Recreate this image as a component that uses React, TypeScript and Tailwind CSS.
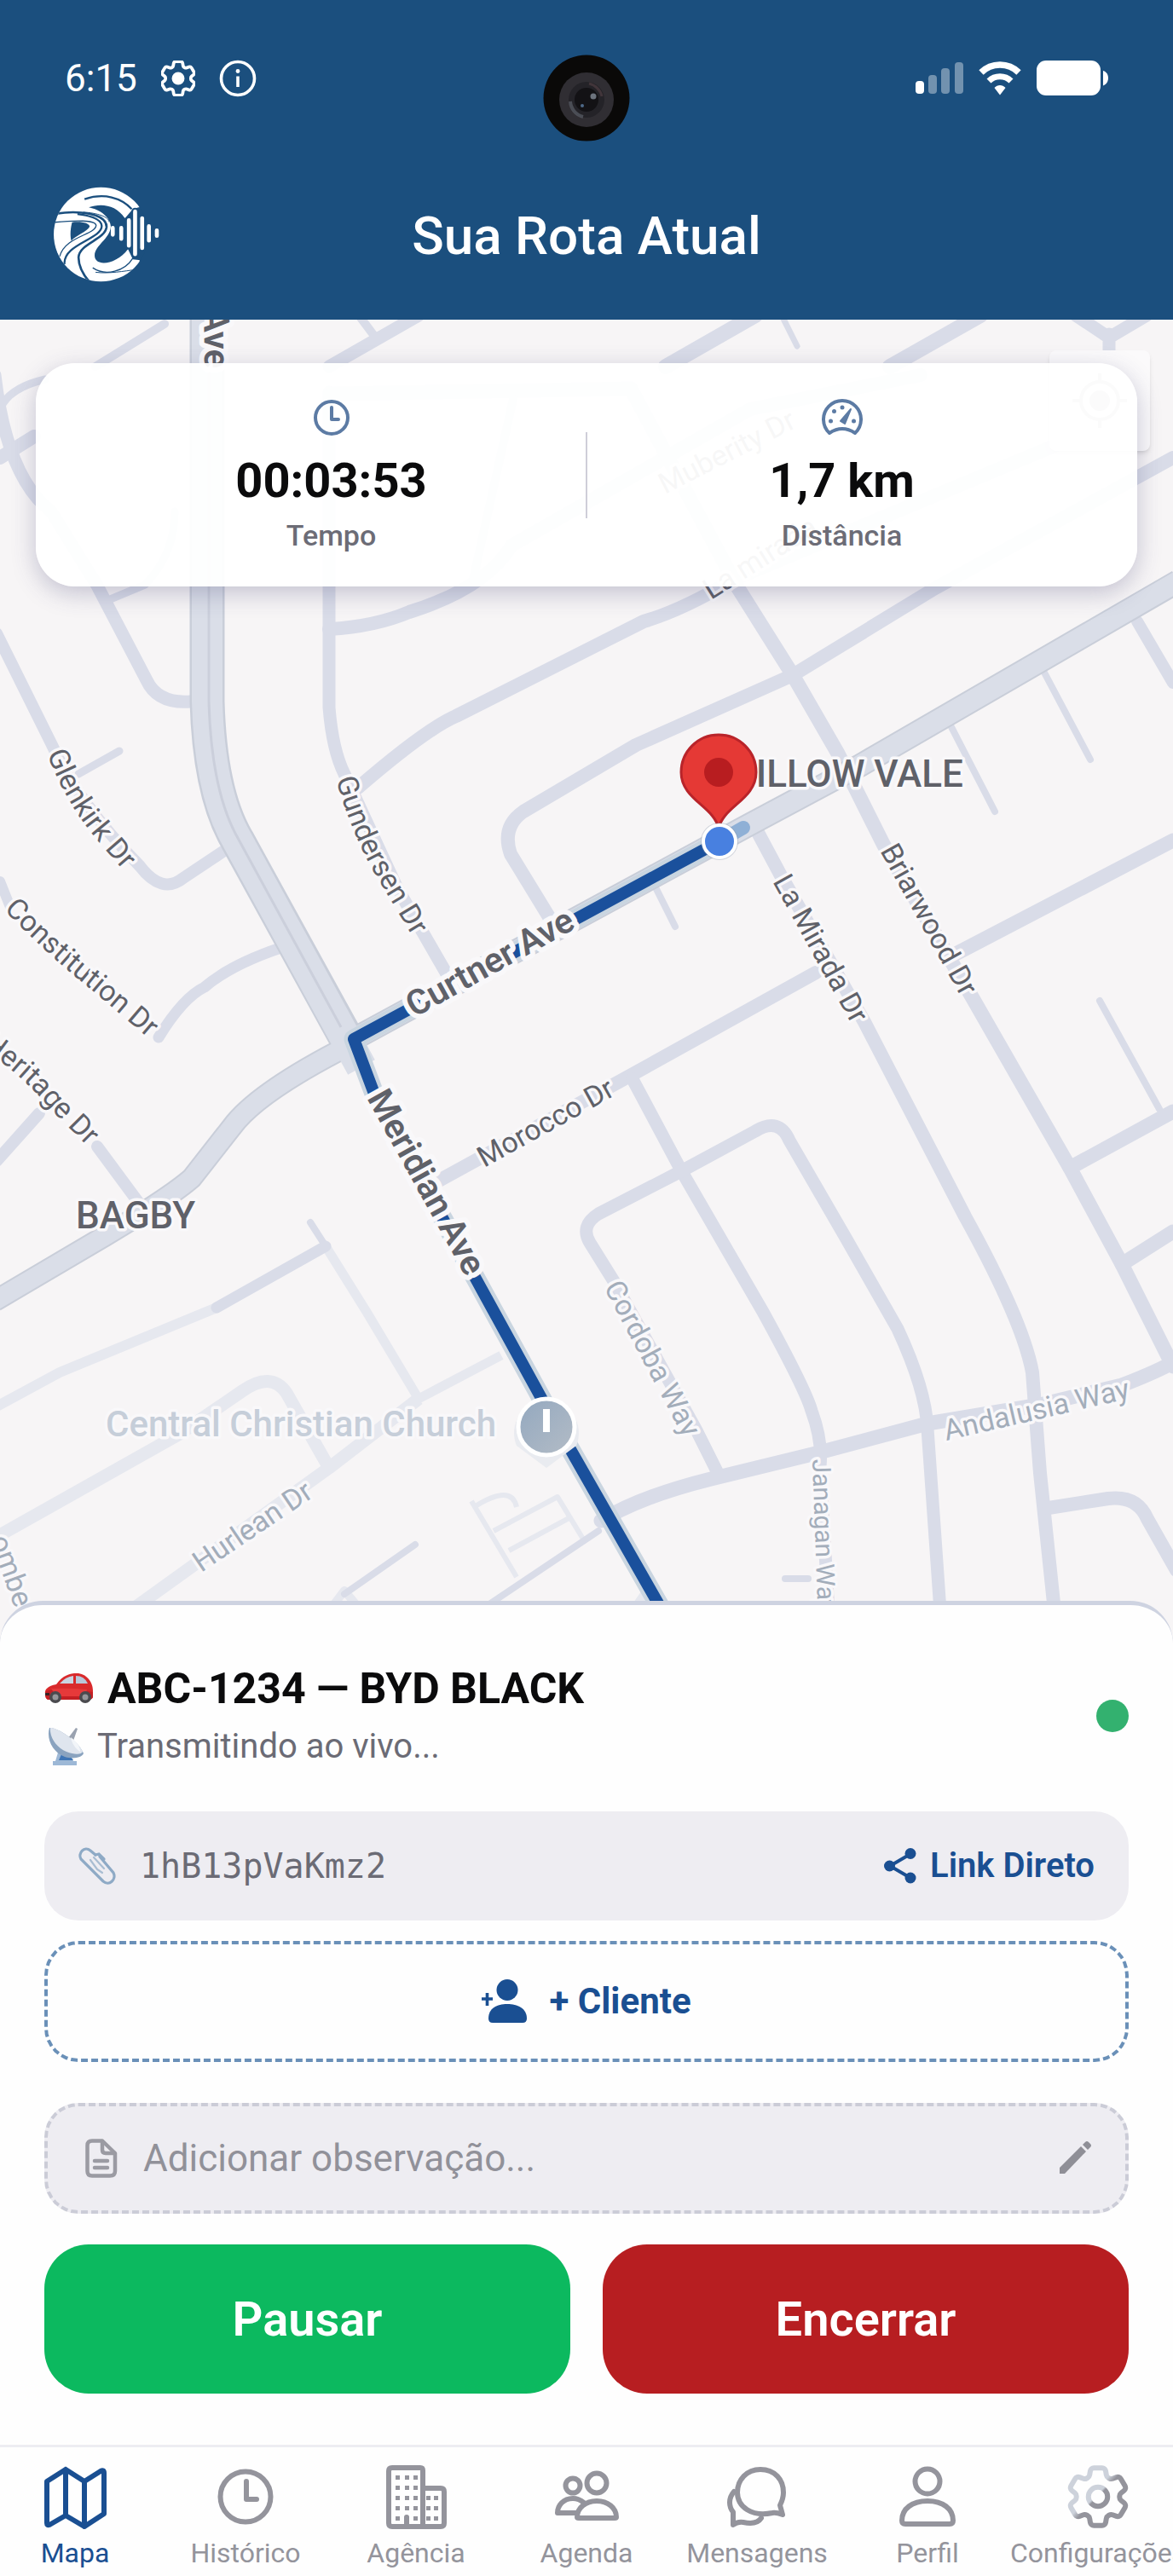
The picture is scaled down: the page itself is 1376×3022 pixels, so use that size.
import type { ReactNode } from "react"

const COG_PATH =
  "M9.594 3.94c.09-.542.56-.94 1.11-.94h2.593c.55 0 1.02.398 1.11.94l.213 1.281c.063.374.313.686.645.87.074.04.147.083.22.127.325.196.72.257 1.075.124l1.217-.456a1.125 1.125 0 0 1 1.37.49l1.296 2.247a1.125 1.125 0 0 1-.26 1.431l-1.003.827c-.293.241-.438.613-.43.992a7.723 7.723 0 0 1 0 .255c-.008.378.137.75.43.991l1.004.827c.424.35.534.955.26 1.43l-1.298 2.247a1.125 1.125 0 0 1-1.369.491l-1.217-.456c-.355-.133-.75-.072-1.076.124a6.47 6.47 0 0 1-.22.128c-.331.183-.581.495-.644.869l-.213 1.281c-.09.543-.56.94-1.11.94h-2.594c-.55 0-1.019-.398-1.11-.94l-.213-1.281c-.062-.374-.312-.686-.644-.87a6.52 6.52 0 0 1-.22-.127c-.325-.196-.72-.257-1.076-.124l-1.217.456a1.125 1.125 0 0 1-1.369-.49l-1.297-2.247a1.125 1.125 0 0 1 .26-1.431l1.004-.827c.292-.24.437-.613.43-.991a6.932 6.932 0 0 1 0-.255c.007-.38-.138-.751-.43-.992l-1.004-.827a1.125 1.125 0 0 1-.26-1.43l1.297-2.247a1.125 1.125 0 0 1 1.37-.491l1.216.456c.356.133.751.072 1.076-.124.072-.044.146-.086.22-.128.332-.183.582-.495.644-.869l.214-1.28Z"

/* ---------- header ---------- */

function StatusBar() {
  return (
    <div className="flex h-11 items-center justify-between px-[76px] text-white">
      <div className="flex items-center gap-7">
        <span className="text-[44px] leading-[44px]">6:15</span>
        <svg className="h-[42px] w-10" viewBox="2.9 2.6 18.2 18.8" fill="none">
          <path d={COG_PATH} stroke="currentColor" strokeWidth="1.7" />
          <circle cx="12" cy="12" r="3.4" fill="currentColor" />
        </svg>
        <svg className="size-11" viewBox="0 0 44 44" fill="none">
          <circle cx="22" cy="22" r="19.5" stroke="currentColor" strokeWidth="3.6" />
          <circle cx="22" cy="13.5" r="2.4" fill="currentColor" />
          <path d="M22 19.5V32" stroke="currentColor" strokeWidth="3.6" />
        </svg>
      </div>

      <div className="flex items-center gap-[18px]">
        <svg className="h-10 w-14" viewBox="0 0 56 40" fill="currentColor">
          <rect x="0" y="23" width="10" height="15" rx="4" />
          <g opacity=".38">
            <rect x="15" y="16" width="10" height="22" rx="4" />
            <rect x="30" y="8" width="10" height="30" rx="4" />
            <rect x="46" y="1" width="10" height="37" rx="4" />
          </g>
        </svg>
        <svg className="h-10 w-[50px]" viewBox="0 0 50 40" fill="none">
          <path d="M3 13C15 1 35 1 47 13" stroke="currentColor" strokeWidth="7.5" />
          <path d="M12 23C19 16 31 16 38 23" stroke="currentColor" strokeWidth="7" />
          <path d="M25 39.5 18.5 31C22 27 28 27 31.5 31Z" fill="currentColor" />
        </svg>
        <svg className="h-[42px] w-[84px]" viewBox="0 0 84 42" fill="currentColor">
          <rect width="75" height="41" rx="11" />
          <path d="M78 12C86 14 86 27 78 29.5Z" />
        </svg>
      </div>
    </div>
  )
}

function CameraHole() {
  return (
    <svg
      className="absolute top-16 left-1/2 size-[102px] -translate-x-1/2"
      viewBox="0 0 102 102"
      aria-hidden="true"
    >
      <circle cx="51" cy="51" r="50.5" fill="#0a0908" />
      <circle cx="51" cy="53" r="32" fill="#302e33" />
      <circle cx="51" cy="53" r="21" fill="#242328" />
      <circle cx="51" cy="53" r="14" fill="#131215" />
      <path d="M32 55a20 20 0 0 0 15 18" fill="none" stroke="#5b5f68" strokeWidth="4" opacity=".7" />
      <path d="M54 34a20 20 0 0 1 15 15" fill="none" stroke="#4e3d42" strokeWidth="3" opacity=".7" />
      <circle cx="59" cy="49" r="3.5" fill="#6c737d" />
      <circle cx="46" cy="60" r="2" fill="#4e6a88" />
    </svg>
  )
}

function Logo() {
  return (
    <svg className="h-28 w-[125px]" viewBox="64 53 375 338" role="img" aria-label="Logo">
      <defs>
        <clipPath id="logo-disc">
          <circle cx="233" cy="222" r="167" />
        </clipPath>
      </defs>
      <g clipPath="url(#logo-disc)">
        <rect x="60" y="50" width="310" height="345" fill="#fff" />
        <g fill="#1b4f7e">
          <path d="M131 179C160 174 195 182 193 195C182 214 146 224 128 245C123 222 126 198 131 179Z" />
          <path d="M190 126C235 110 288 118 318 165L346 132L420 110V318L346 310L329 274C290 328 214 338 211 300C208 262 264 240 268 195C266 164 238 136 190 126Z" />
        </g>
        <g fill="none" stroke="#1b4f7e">
          <path d="M175 97C245 74 305 92 342 132" strokeWidth="7" />
          <path d="M70 149C150 136 254 146 253 196C248 240 158 254 154 302C153 334 168 362 194 392" strokeWidth="8" />
          <path d="M70 179C140 172 214 170 216 190C214 224 106 228 87 300" strokeWidth="4" />
          <path d="M104 328C98 256 236 240 236 192C234 168 200 156 150 150" strokeWidth="7" />
          <path d="M170 143C220 146 262 160 262 178" strokeWidth="3" />
          <path d="M204 340C250 372 318 352 346 306" strokeWidth="4" />
          <path d="M214 356C262 362 312 352 362 346" strokeWidth="3" />
        </g>
      </g>
      <g stroke="#1b4f7e" strokeWidth="26" strokeLinecap="round">
        <path d="M332 172V262M354 141V292" />
      </g>
      <g stroke="#fff" strokeWidth="14" strokeLinecap="round">
        <path d="M275 199V223M305 199V238M332 172V262M354 141V292M379 165V270M403 193V244M431 208V227" />
      </g>
    </svg>
  )
}

function Header() {
  return (
    <header className="relative bg-[#1b4f7e] pt-[70px] pb-11">
      <StatusBar />
      <CameraHole />
      <div className="mt-[105px] grid grid-cols-[1fr_auto_1fr] items-center px-[62px]">
        <Logo />
        <h1 className="pt-1 text-[62px] leading-[72px] font-medium text-white">Sua Rota Atual</h1>
      </div>
    </header>
  )
}

/* ---------- map ---------- */

interface Road {
  d: string
  w: number
}

const ROADS: Road[] = [
  { d: "M-4 743L61 874Q90 940 164 1016Q190 1050 215 1030L263 998", w: 14 },
  { d: "M92 908L140 881", w: 9 },
  { d: "M-6 440Q8 560 60 600L114 687L172 798Q185 826 224 823", w: 15 },
  { d: "M0 480Q10 455 53 445", w: 9 },
  { d: "M0 537L40 512", w: 16 },
  { d: "M127 704L170 686Q205 650 205 600", w: 9 },
  { d: "M112 430L193 380", w: 10 },
  { d: "M386 430L491 370", w: 15 },
  { d: "M421 370L439 394", w: 10 },
  { d: "M781 430L886 370", w: 18 },
  { d: "M917 370L935 406", w: 7 },
  { d: "M1044 430L1150 370", w: 18 },
  { d: "M1262 370L1301 396L1345 370M1301 392V430", w: 15 },
  { d: "M386 460V830Q390 880 404 908L465 1040L526 1146", w: 15 },
  { d: "M386 738Q440 735 480 718Q570 690 600 640L880 480L1080 440", w: 16 },
  { d: "M420 924Q500 855 535 840L755 729Q800 716 860 680L1340 480", w: 16 },
  { d: "M654 1092L599 1002Q588 970 614 952L746 874L930 792L1097 690L1376 537", w: 16 },
  { d: "M390 462L740 456L864 687L930 792L983 884L1036 990L1141 1171L1255 1370L1316 1483L1376 1603", w: 17 },
  { d: "M602 468L555 680", w: 10 },
  { d: "M886 971L917 1029L1014 1199L1132 1427Q1200 1550 1211 1610L1220 1728L1237 1890", w: 16 },
  { d: "M1123 1118L1376 986", w: 17 },
  { d: "M1224 787L1279 891M1113 847L1167 952M768 1039L792 1087", w: 8 },
  { d: "M1334 729L1376 801", w: 14 },
  { d: "M513 1386L728 1268L957 1141", w: 16 },
  { d: "M742 1266L799 1373L895 1539Q945 1630 952 1655Q965 1690 962 1720L972 1890", w: 15 },
  { d: "M842 1728L818 1680L720 1503L692 1458Q680 1438 702 1424L799 1374L886 1327Q914 1310 926 1338L992 1452L1053 1559Q1086 1630 1088 1676L1103 1890", w: 15 },
  { d: "M705 1784Q750 1756 834 1735L957 1705L1088 1670L1220 1648L1316 1625Q1360 1608 1380 1596", w: 17 },
  { d: "M1230 1769L1300 1758Q1334 1754 1346 1782L1380 1842", w: 16 },
  { d: "M1290 1174L1360 1301", w: 8 },
  { d: "M1255 1370L1376 1304M1316 1483L1376 1445", w: 17 },
  { d: "M0 1034L12 1064", w: 12 },
  { d: "M186 1217Q215 1170 240 1158Q270 1132 329 1112", w: 13 },
  { d: "M114 1345L162 1410M46 1306L-4 1362", w: 14 },
  { d: "M364 1434L382 1462", w: 8 },
  { d: "M702 1796L562 1890M487 1812L404 1870M921 1852H948", w: 8 },
  { d: "M382 1462L254 1534", w: 13 },
]

const FADED_ROADS: Road[] = [
  { d: "M382 1462L430 1539L491 1641L588 1590", w: 11 },
  { d: "M254 1534L70 1610L-4 1650", w: 12 },
  { d: "M-4 1803L211 1682L284 1632Q318 1608 336 1634L386 1722", w: 15 },
  { d: "M158 1886L386 1722L491 1641", w: 15 },
  { d: "M386 1890L404 1866L424 1890M742 1890L756 1870", w: 10 },
  { d: "M553 1761L606 1850M556 1768Q600 1740 606 1768M579 1796L654 1756L685 1807M597 1819L671 1779", w: 6 },
]

interface CurvedLabel {
  id: string
  d: string
  text: string
}

interface StraightLabel {
  x: number
  y: number
  angle: number
  text: string
  size?: number
  strong?: boolean
  faint?: boolean
}

const CURVED_LABELS: CurvedLabel[] = [
  { id: "gundersen", d: "M394 914Q412 976 438 1022L492 1112", text: "Gundersen Dr" },
  { id: "glenkirk", d: "M55 884Q78 944 116 988L168 1048", text: "Glenkirk Dr" },
  { id: "constitution", d: "M4 1067Q60 1124 106 1160L200 1240", text: "Constitution Dr" },
  { id: "heritage", d: "M-22 1228Q30 1265 60 1302L130 1372", text: "Heritage Dr" },
]

const STRAIGHT_LABELS: StraightLabel[] = [
  { x: 239, y: 362, angle: 89, text: "Ave", size: 42, strong: true },
  { x: 486, y: 1194, angle: -29, text: "Curtner Ave", size: 41, strong: true },
  { x: 430, y: 1288, angle: 61, text: "Meridian Ave", size: 41, strong: true },
  { x: 568, y: 1370, angle: -29, text: "Morocco Dr" },
  { x: 906, y: 1034, angle: 61, text: "La Mirada Dr" },
  { x: 1032, y: 998, angle: 61, text: "Briarwood Dr" },
  { x: 708, y: 1510, angle: 62, text: "Cordoba Way", faint: true },
  { x: 1110, y: 1690, angle: -13, text: "Andalusia Way", faint: true },
  { x: 236, y: 1845, angle: -34, text: "Hurlean Dr", faint: true },
  { x: 953, y: 1712, angle: 88, text: "Janagan Way", size: 30, faint: true },
  { x: -12, y: 1806, angle: 70, text: "ombe", faint: true },
  { x: 834, y: 704, angle: -32, text: "La mirada" },
  { x: 780, y: 580, angle: -27, text: "Muberity Dr" },
]

function RouteMap() {
  return (
    <svg
      className="absolute inset-0 size-full"
      viewBox="0 375 1376 1600"
      preserveAspectRatio="xMidYMin slice"
      role="img"
      aria-label="Mapa da rota"
    >
      <defs>
        {CURVED_LABELS.map((label) => (
          <path key={label.id} id={`street-${label.id}`} d={label.d} />
        ))}
        <linearGradient id="poi-fill" x1="0" y1="0" x2="1" y2="1">
          <stop offset="0" stopColor="#93a8bf" />
          <stop offset="1" stopColor="#b3bcc6" />
        </linearGradient>
      </defs>
      <rect y="375" width="1376" height="1600" fill="#f7f5f6" />

      <g fill="none" stroke="#e6e8ef" strokeLinejoin="round">
        {FADED_ROADS.map((road) => (
          <path key={road.d} d={road.d} strokeWidth={road.w} />
        ))}
      </g>
      <g fill="none" stroke="#d9dce8" strokeLinejoin="round" strokeLinecap="round">
        {ROADS.map((road) => (
          <path key={road.d} d={road.d} strokeWidth={road.w} />
        ))}
      </g>

      {/* avenues with an outline */}
      <g fill="none" strokeLinejoin="round">
        <g stroke="#c9ced9">
          <path d="M-6 1526L123 1450Q200 1404 225 1382L272 1322Q300 1284 395 1234" strokeWidth="26" />
          <path d="M413 1220L878 968L1009 898L1382 682" strokeWidth="28" />
          <path d="M243 370V823Q246 930 278 985L410 1225" strokeWidth="41" />
        </g>
        <g stroke="#dadee8">
          <path d="M-6 1526L123 1450Q200 1404 225 1382L272 1322Q300 1284 395 1234" strokeWidth="22" />
          <path d="M413 1220L878 968L1009 898L1382 682" strokeWidth="24" />
          <path d="M243 370V823Q246 930 278 985L424 1252" strokeWidth="36" />
        </g>
        <path d="M245 370V823Q248 930 280 985L400 1205" stroke="#cbcfdb" strokeWidth="3" />
      </g>

      {/* travelled route */}
      <g fill="none" strokeLinejoin="round">
        <path d="M844 987L415 1219L439 1283L557 1498L641 1651L780 1895" stroke="#c9d5e0" strokeWidth="23" />
        <path d="M844 987L872 971" stroke="#8fb0d6" strokeWidth="16" strokeLinecap="round" />
        <path d="M844 987L415 1219L439 1283L557 1498L641 1651L780 1895" stroke="#1a509c" strokeWidth="14" />
      </g>

      <g
        fontFamily="Roboto, sans-serif"
        fill="#5f6169"
        stroke="#f9f8fa"
        strokeWidth="7"
        strokeLinejoin="round"
        paintOrder="stroke"
      >
        {CURVED_LABELS.map((label) => (
          <text key={label.id} fontSize="34">
            <textPath href={`#street-${label.id}`}>{label.text}</textPath>
          </text>
        ))}
        {STRAIGHT_LABELS.map((label) => (
          <text
            key={label.text}
            transform={`translate(${label.x} ${label.y}) rotate(${label.angle})`}
            fontSize={label.size ?? 34}
            fontWeight={label.strong ? 600 : 400}
            strokeWidth={label.strong ? 12 : undefined}
            fill={label.faint ? "#a3adba" : undefined}
          >
            {label.text}
          </text>
        ))}
        <text x="89" y="1441" fontSize="44" fontWeight="500">
          BAGBY
        </text>
        <text x="848" y="923" fontSize="44" fontWeight="500">
          WILLOW VALE
        </text>
        <text x="124" y="1685" fontSize="42" fontWeight="500" fill="#c6ced9">
          Central Christian Church
        </text>
      </g>

      {/* church */}
      <path d="M641 1722L606 1696A38 38 0 1 1 676 1696Z" fill="#e9ebf0" />
      <circle cx="641" cy="1674" r="33" fill="url(#poi-fill)" stroke="#fff" strokeWidth="5" />
      <path d="M641 1653V1680" stroke="#fff" strokeWidth="8" />

      {/* destination */}
      <path
        d="M843 972C838 946 799 938 799 906A44 44 0 0 1 887 906C887 938 848 946 843 972Z"
        fill="#e53935"
        stroke="#b9242a"
        strokeWidth="3"
      />
      <circle cx="843" cy="906" r="17" fill="#b81d20" />
      <circle cx="844" cy="987" r="22" fill="#8d99ad" opacity=".35" />
      <circle cx="844" cy="987" r="19" fill="#4880e0" stroke="#fff" strokeWidth="4" />
    </svg>
  )
}

interface StatProps {
  icon: ReactNode
  value: string
  label: string
}

function Stat({ icon, value, label }: StatProps) {
  return (
    <div className="flex flex-1 flex-col items-center">
      {icon}
      <strong className="mt-[18px] text-[56px] leading-[64px] font-bold text-[#0b0b0c]">
        {value}
      </strong>
      <span className="mt-3 text-[34px] leading-10 font-medium text-[#6c6c76]">{label}</span>
    </div>
  )
}

function MapArea() {
  return (
    <section className="relative flex-1">
      <RouteMap />
      <button
        type="button"
        aria-label="Minha localização"
        className="absolute top-9 right-[27px] flex size-[118px] items-center justify-center rounded-lg bg-[#fbfafb] shadow-md"
      >
        <svg className="size-16" viewBox="0 0 64 64" fill="none" stroke="#a9a5a9" strokeWidth="4">
          <circle cx="32" cy="32" r="22" />
          <circle cx="32" cy="32" r="10" fill="#a9a5a9" />
          <path d="M32 0v10M32 54v10M0 32h10M54 32h10" />
        </svg>
      </button>

      <div className="relative mx-[42px] mt-[51px] flex items-center rounded-[46px] bg-white/95 px-12 py-10 shadow-[0_8px_28px_rgba(60,60,110,0.28)]">
        <Stat
          label="Tempo"
          value="00:03:53"
          icon={
            <svg className="size-12" viewBox="0 0 48 48" fill="none" stroke="#5c7ba4" strokeWidth="4">
              <circle cx="24" cy="24" r="19" />
              <path d="M24 12v14h8" strokeLinecap="round" strokeLinejoin="round" />
            </svg>
          }
        />
        <div className="h-[101px] w-[2px] bg-[#cfced9]" />
        <Stat
          label="Distância"
          value="1,7 km"
          icon={
            <svg className="size-12" viewBox="0 0 48 48" fill="none" stroke="#5c7ba4" strokeWidth="4">
              <path d="M9 42A22 22 0 1 1 39 42Q24 32 9 42Z" strokeLinejoin="round" />
              <path d="M22 28 34 14 27 31Z" fill="#5c7ba4" strokeWidth="2" strokeLinejoin="round" />
              <g fill="#5c7ba4" stroke="none">
                <circle cx="24" cy="12" r="2.5" />
                <circle cx="14.5" cy="16.5" r="2.5" />
                <circle cx="10.5" cy="28" r="2.5" />
                <circle cx="37.5" cy="28" r="2.5" />
              </g>
            </svg>
          }
        />
      </div>
    </section>
  )
}

/* ---------- trip sheet ---------- */

function CarIcon() {
  return (
    <svg className="h-9 w-[58px]" viewBox="0 0 58 36" aria-hidden="true">
      <path
        d="M1 24C0 19 4 15 14 13C22 2 30 0 38 0C49 0 57 10 57 20V27Q57 30 53 31H5Q1 31 1 24Z"
        fill="#d92a2c"
      />
      <path d="M2 21Q20 15 57 22V27Q57 30 53 31H5Q1 31 1 24Z" fill="#c41f24" />
      <path d="M8 18Q30 17 50 19L48 27H14Z" fill="#e6393a" />
      <path d="M18 12Q25 4 34 3V12Z" fill="#c9d5e2" />
      <path d="M37 3Q47 3 51 12H37Z" fill="#b8c8da" />
      <path d="M1 23h5v3H1Z" fill="#3a2224" />
      <g fill="#4a4a4e">
        <circle cx="13" cy="28" r="7" />
        <circle cx="48" cy="28" r="7" />
      </g>
      <g fill="#96969a">
        <circle cx="13" cy="28" r="3.5" />
        <circle cx="48" cy="28" r="3.5" />
      </g>
    </svg>
  )
}

function DishIcon() {
  return (
    <svg className="h-[46px] w-[42px]" viewBox="0 0 42 46" aria-hidden="true">
      <path d="M12 30 9 40H6v5h28v-5h-4l-5-8Z" fill="#9db8d6" />
      <path d="M16 32 13 39h17l-5-7Z" fill="#3f75b5" />
      <path d="M24 13 33 1l2 1-5 14Z" fill="#9aa2b0" />
      <path d="M2 1C-2 14 6 30 20 35C30 38 40 36 42 31C40 26 34 18 24 11C16 5 8 1 2 1Z" fill="#8aa3bf" />
      <path d="M3 1C2 12 10 24 22 29C32 33 40 32 41 29C38 22 32 16 24 11C16 5 8 1 3 1Z" fill="#dfe5ee" />
      <path d="M27 12C35 18 38 24 38 29C33 26 28 19 27 12Z" fill="#f2f5f9" />
    </svg>
  )
}

function PaperclipIcon() {
  return (
    <svg className="size-11" viewBox="0 0 44 44" fill="none" strokeLinecap="round" aria-hidden="true">
      <path
        d="M25 11 41 30C45 38 36 46 29 40L3 14C-1 7 7 -2 14 4L20 9"
        stroke="#8eaac6"
        strokeWidth="3.2"
      />
      <path d="M20 9 24 8 30 14" stroke="#8eaac6" strokeWidth="3.2" />
      <path d="M14 15 22 26 28 30M18 12 30 25" stroke="#a9bdd2" strokeWidth="2.2" />
    </svg>
  )
}

function TripSheet() {
  return (
    <section className="relative -mt-[50px] rounded-t-[50px] border-t-[5px] border-[#ced3e1] bg-[#fefefe] px-[52px] pt-[66px] pb-[60px]">
      <div className="flex items-center justify-between">
        <div>
          <h2 className="flex items-center gap-4 text-[50px] leading-[64px] font-bold text-[#0b0b0c]">
            <CarIcon />
            ABC-1234 — BYD BLACK
          </h2>
          <p className="mt-2 flex items-center gap-4 pl-1 text-[40px] leading-[56px] text-[#6b6b75]">
            <DishIcon />
            Transmitindo ao vivo...
          </p>
        </div>
        <span className="size-[38px] rounded-full bg-[#33b16f]" />
      </div>

      <div className="mt-12 flex h-32 items-center justify-between rounded-[40px] bg-[#eeedf2] px-10">
        <div className="flex items-center gap-7">
          <PaperclipIcon />
          <code className="font-['DejaVu_Sans_Mono',monospace] text-[40px] leading-[48px] text-[#6b6b75]">
            1hB13pVaKmz2
          </code>
        </div>
        <button
          type="button"
          className="flex items-center gap-4 text-[40px] leading-[48px] font-semibold text-[#1a4f92]"
        >
          <svg className="h-[42px] w-[38px]" viewBox="0 0 38 42" fill="currentColor">
            <path d="M31 7 7 21 31 35" fill="none" stroke="currentColor" strokeWidth="4" />
            <circle cx="31" cy="6.5" r="6.5" />
            <circle cx="6.5" cy="21" r="6.5" />
            <circle cx="31" cy="35" r="6.5" />
          </svg>
          Link Direto
        </button>
      </div>

      <button
        type="button"
        className="mt-6 flex h-[142px] w-full items-center justify-center gap-[26px] rounded-[40px] border-4 border-dashed border-[#6a90b8] text-[42px] leading-[48px] font-bold text-[#1a4f92]"
      >
        <svg className="h-[52px] w-[53px]" viewBox="0 0 53 52" fill="currentColor">
          <circle cx="30" cy="12.5" r="12.5" />
          <path d="M8 46C8 34 18 29 30 29S53 34 53 46Q53 51 48 51H13Q8 51 8 46Z" />
          <path d="M6.5 16V31M0 23H13" stroke="currentColor" strokeWidth="3.6" />
        </svg>
        + Cliente
      </button>

      <div className="mt-12 flex h-[130px] items-center rounded-[40px] border-4 border-dashed border-[#cbccd7] bg-[#eeedf2] px-9">
        <label htmlFor="observacao" aria-label="Observação">
          <svg
            className="h-[46px] w-[50px]"
            viewBox="0 0 50 46"
            fill="none"
            stroke="#9b9ba3"
            strokeWidth="4.5"
            strokeLinejoin="round"
            strokeLinecap="round"
          >
            <path d="M16 2.5H28L43 17V38Q43 43.5 37 43.5H16Q10.5 43.5 10.5 38V8Q10.5 2.5 16 2.5Z" />
            <path d="M28 3V13Q28 17 32 17H42M19 26H34M19 34H34" />
          </svg>
        </label>
        <input
          id="observacao"
          type="text"
          placeholder="Adicionar observação..."
          className="ml-[26px] min-w-0 flex-1 bg-transparent text-[44px] leading-[52px] text-[#3c3c43] outline-none placeholder:text-[#919199]"
        />
        <svg className="size-[46px]" viewBox="0 0 46 46" fill="#8f8f97">
          <path d="M5 41V34L30 9 36 15 11 41Z" />
          <path d="M32 7 35 4Q37 2 39 4L41 6Q43 8 41 10L38 13Z" />
        </svg>
      </div>

      <div className="mt-9 grid grid-cols-2 gap-[38px] text-[56px] leading-[64px] font-semibold text-white">
        <button type="button" className="h-[175px] rounded-[52px] bg-[#0cb95f]">
          Pausar
        </button>
        <button type="button" className="h-[175px] rounded-[52px] bg-[#b71e21]">
          Encerrar
        </button>
      </div>
    </section>
  )
}

/* ---------- bottom navigation ---------- */

const BUILDING_WINDOWS = [
  ...[13, 25, 37, 49, 61].flatMap((y) => [10, 21, 31].map((x) => [x, y])),
  ...[37, 49, 61].flatMap((y) => [46, 55].map((x) => [x, y])),
]

interface Tab {
  label: string
  icon: ReactNode
  active?: boolean
}

const TABS: Tab[] = [
  {
    label: "Mapa",
    active: true,
    icon: <path d="M5 20 27 6V60L8 71Q5 72 5 69ZM27 6 49 20V73L27 60M49 20 68 8Q72 6 72 10V58L49 73" />,
  },
  {
    label: "Histórico",
    icon: (
      <>
        <circle cx="38" cy="38" r="29.5" />
        <path d="M39 20V41H51" />
      </>
    ),
  },
  {
    label: "Agência",
    icon: (
      <>
        <path d="M10 4H43Q46 4 46 7V73H10Q6 73 6 69V8Q6 4 10 4ZM46 28H67Q71 28 71 32V69Q71 73 67 73H46M27 62V72" />
        <g fill="currentColor" stroke="none">
          {BUILDING_WINDOWS.map(([x, y]) => (
            <rect key={`${x}-${y}`} x={x + 4} y={y} width="5" height="5" />
          ))}
        </g>
      </>
    ),
  },
  {
    label: "Agenda",
    icon: (
      <>
        <circle cx="22" cy="25" r="8.5" />
        <circle cx="50" cy="22" r="11.5" />
        <path d="M35 45Q29 40 22 40C11 40 4 48 4 57H26" />
        <path d="M27 62C27 51 37 43 50 43S73 51 73 62Q73 63 71 63H29Q27 63 27 62Z" />
      </>
    ),
  },
  {
    label: "Mensagens",
    icon: (
      <>
        <path d="M42 6C59 6 69 18 69 33C69 39 67 44 65 48L68 59Q60 56 56 57C32 62 15 50 15 33C15 18 26 6 42 6Z" />
        <path d="M11 32C4 40 5 50 10 56V71Q15 67 22 68C31 70 39 69 43 63" />
      </>
    ),
  },
  {
    label: "Perfil",
    icon: (
      <>
        <circle cx="38" cy="20" r="14.5" />
        <path d="M8 66C8 52 20 43 38 43S68 52 68 66Q68 70 64 70H12Q8 70 8 66Z" />
      </>
    ),
  },
  {
    label: "Configurações",
    icon: (
      <g transform="translate(-7 -7) scale(3.75)" strokeWidth="1.6" stroke="url(#cog-shade)">
        <path d={COG_PATH} />
        <circle cx="12" cy="12" r="3" />
      </g>
    ),
  },
]

function BottomNav() {
  return (
    <nav className="relative overflow-hidden border-t-[3px] border-[#ededf2] bg-[#fefefe] pt-5 pb-[7px]">
      <div className="-mx-3 grid grid-cols-7">
        {TABS.map((tab) => (
          <a
            key={tab.label}
            href="#"
            aria-current={tab.active ? "page" : undefined}
            className={`flex min-w-0 flex-col items-center ${tab.active ? "text-[#1a4f92]" : "text-[#94949c]"}`}
          >
            <svg
              className="size-[76px]"
              viewBox="0 0 76 76"
              fill="none"
              stroke="currentColor"
              strokeWidth="6"
              strokeLinejoin="round"
              strokeLinecap="round"
            >
              <defs>
                <linearGradient id="cog-shade" x1="0" y1="0" x2="1" y2="1">
                  <stop offset=".42" stopColor="#cdd2db" />
                  <stop offset=".5" stopColor="#94949c" />
                </linearGradient>
              </defs>
              {tab.icon}
            </svg>
            <span className="mt-2 text-[32px] leading-10 whitespace-nowrap">{tab.label}</span>
          </a>
        ))}
      </div>
    </nav>
  )
}

export default function App() {
  return (
    <main className="flex min-h-screen flex-col overflow-x-hidden bg-white font-['Roboto',sans-serif]">
      <Header />
      <MapArea />
      <TripSheet />
      <BottomNav />
    </main>
  )
}
